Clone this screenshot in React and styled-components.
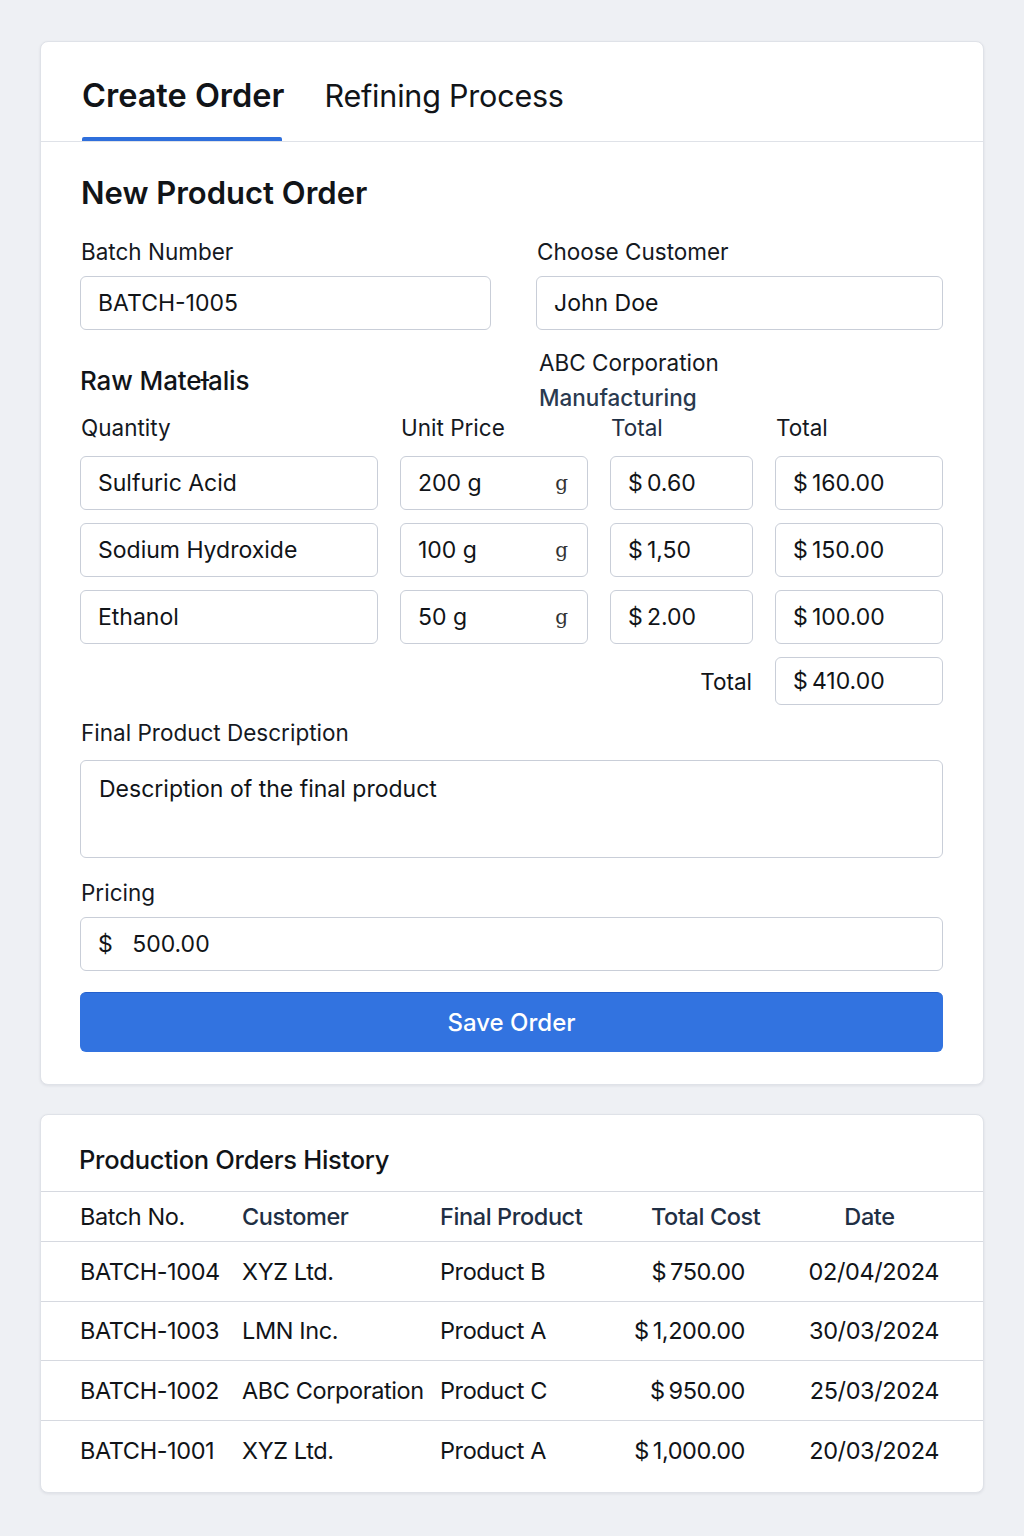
import React from "react";
import styled, { createGlobalStyle } from "styled-components";

const Global = createGlobalStyle`
  * { box-sizing: border-box; }
  body {
    margin: 0;
    background: #eef0f4;
    font-family: Inter, "Noto Sans", "Liberation Sans", sans-serif;
    color: #111418;
  }
`;

const Page = styled.div`
  padding: 41px 40px 40px;
  display: flex;
  flex-direction: column;
  gap: 29px;
`;

const Card = styled.section`
  background: #fff;
  border: 1px solid #dfe2e8;
  border-radius: 8px;
  box-shadow: 0 1px 3px rgba(20, 30, 50, 0.08);
  overflow: hidden;
`;

const TabBar = styled.div`
  display: flex;
  gap: 40px;
  padding: 0 40px 0 41px;
  height: 100px;
  border-bottom: 1px solid #dfe2e8;
`;

const Tab = styled.div`
  position: relative;
  display: flex;
  align-items: center;
  padding-top: 8px;
  font-size: ${(p) => (p.$active ? 32.5 : 30.5)}px;
  font-weight: ${(p) => (p.$active ? 600 : 400)};
  color: #111418;
  letter-spacing: ${(p) => (p.$active ? "0px" : "-0.2px")};
  &::after {
    content: "";
    display: ${(p) => (p.$active ? "block" : "none")};
    position: absolute;
    left: 0;
    right: 2px;
    bottom: 0;
    height: 4px;
    border-radius: 2px 2px 0 0;
    background: #2f6fdc;
  }
`;

const Body = styled.div`
  padding: 33px 40px 32px 39px;
  display: flex;
  flex-direction: column;
`;

const Title = styled.h2`
  margin: 0 0 27px 1px;
  font-size: 31px;
  font-weight: 600;
  line-height: 36px;
`;

const TwoCol = styled.div`
  display: grid;
  grid-template-columns: 411px 1fr;
  column-gap: 45px;
`;

const Field = styled.div`
  display: flex;
  flex-direction: column;
`;

const Label = styled.div`
  font-size: 22.5px;
  line-height: 28px;
  color: #15191f;
  padding-left: 1px;
  margin-bottom: ${(p) => p.$mb || 10}px;
`;

const Box = styled.div`
  height: ${(p) => p.$h || 54}px;
  border: 1px solid #c9ced8;
  border-radius: 6px;
  display: flex;
  align-items: ${(p) => (p.$top ? "flex-start" : "center")};
  justify-content: space-between;
  padding: ${(p) => (p.$top ? "14px 18px" : "0 17px")};
  font-size: 23px;
  color: #111418;
  background: #fff;
`;

const Unit = styled.span`
  font-family: "DejaVu Serif", serif;
  font-size: 20px;
  color: #333;
  margin-right: 2px;
`;

const MaterialsHead = styled.div`
  display: grid;
  grid-template-columns: 456px 1fr;
  margin-top: 15px;
`;

const SubTitle = styled.h3`
  margin: 21px 0 0 0;
  font-size: 26px;
  font-weight: 500;
  line-height: 30px;
  letter-spacing: -0.1px;
`;

const Options = styled.div`
  display: flex;
  flex-direction: column;
  padding-left: 3px;
`;

const Option = styled.div`
  font-size: 22.5px;
  line-height: 35px;
  font-weight: ${(p) => (p.$muted ? 500 : 400)};
  color: ${(p) => (p.$muted ? "#2a3a4f" : "#15191f")};
`;

const MatGrid = styled.div`
  display: grid;
  grid-template-columns: 298px 188px 143px 1fr;
  column-gap: 22px;
  row-gap: 13px;
  margin-top: -1px;
`;

const ColHead = styled.div`
  font-size: 22.5px;
  line-height: 28px;
  margin-bottom: 1px;
  padding-left: 1px;
  color: ${(p) => p.$c || "#15191f"};
`;

const TotalLabel = styled.div`
  grid-column: 1 / 4;
  display: flex;
  justify-content: flex-end;
  align-items: center;
  font-size: 22.5px;
  padding-right: 1px;
`;

const Section = styled.div`
  margin-top: ${(p) => p.$mt || 0}px;
  display: flex;
  flex-direction: column;
`;

const Button = styled.button`
  margin-top: 21px;
  height: 60px;
  border: none;
  border-radius: 6px;
  background: #3273e0;
  color: #fff;
  font-family: inherit;
  font-size: 24px;
  font-weight: 500;
  border-top: 1px solid #2460cc;
`;

const HistoryTitle = styled.h3`
  margin: 0;
  padding: 29px 38px 0;
  height: 77px;
  font-size: 25.5px;
  font-weight: 500;
  letter-spacing: -0.3px;
  border-bottom: 1px solid #d6d9e0;
`;

const Table = styled.div`
  display: flex;
  flex-direction: column;
  padding-bottom: 12px;
`;

const Row = styled.div`
  display: grid;
  grid-template-columns: 162px 198px 194px 126px 1fr;
  align-items: center;
  height: ${(p) => (p.$head ? 50 : 59.5)}px;
  padding: 0 39px 0 39px;
  border-bottom: ${(p) => (p.$last ? "none" : "1px solid #d6d9e0")};
  font-size: 23.5px;
  letter-spacing: -0.4px;
`;

const Cell = styled.div`
  white-space: nowrap;
  text-align: ${(p) => p.$align || "left"};
  padding: ${(p) => p.$pad || "0"};
  color: ${(p) => (p.$slate ? "#1f2f44" : "#111418")};
  font-weight: ${(p) => (p.$slate ? 500 : 400)};
`;

const materials = [
  ["Sulfuric Acid", "200 g", "$\u20090.60", "$\u2009160.00"],
  ["Sodium Hydroxide", "100 g", "$\u20091,50", "$\u2009150.00"],
  ["Ethanol", "50 g", "$\u20092.00", "$\u2009100.00"],
];

const history = [
  ["BATCH-1004", "XYZ Ltd.", "Product B", "$\u2009750.00", "02/04/2024"],
  ["BATCH-1003", "LMN Inc.", "Product A", "$\u20091,200.00", "30/03/2024"],
  ["BATCH-1002", "ABC Corporation", "Product C", "$\u2009950.00", "25/03/2024"],
  ["BATCH-1001", "XYZ Ltd.", "Product A", "$\u20091,000.00", "20/03/2024"],
];

export default function App() {
  return (
    <>
      <Global />
      <Page>
        <Card>
          <TabBar>
            <Tab $active>Create Order</Tab>
            <Tab>Refining Process</Tab>
          </TabBar>
          <Body>
            <Title>New Product Order</Title>
            <TwoCol>
              <Field>
                <Label>Batch Number</Label>
                <Box>BATCH-1005</Box>
              </Field>
              <Field>
                <Label>Choose Customer</Label>
                <Box>John Doe</Box>
              </Field>
            </TwoCol>
            <MaterialsHead>
              <SubTitle>Raw Mateƚalis</SubTitle>
              <Options>
                <Option>ABC Corporation</Option>
                <Option $muted>Manufacturing</Option>
              </Options>
            </MaterialsHead>
            <MatGrid>
              <ColHead>Quantity</ColHead>
              <ColHead>Unit Price</ColHead>
              <ColHead $c="#1f2f44">Total</ColHead>
              <ColHead>Total</ColHead>
              {materials.map((m) => (
                <React.Fragment key={m[0]}>
                  <Box>{m[0]}</Box>
                  <Box>
                    {m[1]}
                    <Unit>g</Unit>
                  </Box>
                  <Box>{m[2]}</Box>
                  <Box>{m[3]}</Box>
                </React.Fragment>
              ))}
              <TotalLabel>Total</TotalLabel>
              <Box $h={48}>$&#8201;410.00</Box>
            </MatGrid>
            <Section $mt={14}>
              <Label $mb={13}>Final Product Description</Label>
              <Box $h={98} $top>Description of the final product</Box>
            </Section>
            <Section $mt={21}>
              <Label>Pricing</Label>
              <Box>
                <span>$&nbsp;&nbsp;&nbsp;500.00</span>
              </Box>
            </Section>
            <Button>Save Order</Button>
          </Body>
        </Card>
        <Card>
          <HistoryTitle>Production Orders History</HistoryTitle>
          <Table>
            <Row $head>
              <Cell>Batch No.</Cell>
              <Cell $slate>Customer</Cell>
              <Cell $slate>Final Product</Cell>
              <Cell $slate $pad="0 0 0 17px">Total Cost</Cell>
              <Cell $slate $align="center" $pad="0 0 0 35px">Date</Cell>
            </Row>
            {history.map((h, i) => (
              <Row key={h[0]} $last={i === history.length - 1}>
                <Cell>{h[0]}</Cell>
                <Cell>{h[1]}</Cell>
                <Cell>{h[2]}</Cell>
                <Cell $align="right" $pad="0 15px 0 0">{h[3]}</Cell>
                <Cell $align="right" $pad="0 5px 0 0">{h[4]}</Cell>
              </Row>
            ))}
          </Table>
        </Card>
      </Page>
    </>
  );
}
